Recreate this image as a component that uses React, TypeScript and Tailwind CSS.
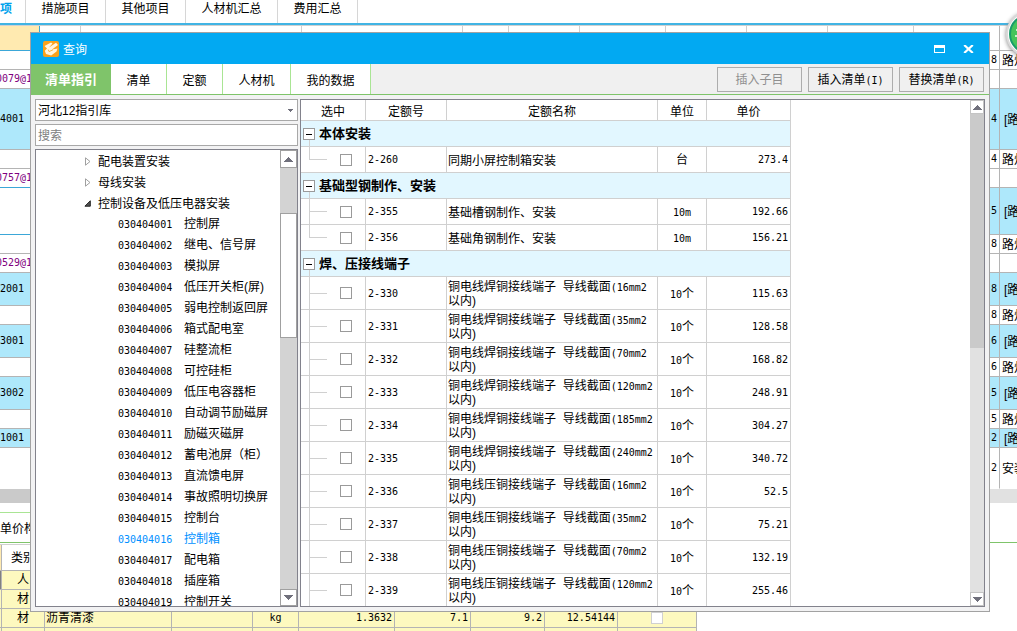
import React from "react";

type Cell = { code?: string; link?: boolean; num?: string; text?: string; height: string; left: string; right: string };

const CYAN = "bg-[#aee8fb] border-[#b4b4b4]";
const WHITE = "bg-white border-[#b4b4b4]";
const WHITE_BLUE = "bg-white border-[#3ba7d8]";
const NUM = "font-['DejaVu_Sans_Mono',monospace] text-[10px]";

const sheetRows: Cell[] = [
  { height: "h-[25px]", left: "bg-[#ffeab0] border-[#3ba7d8]", right: WHITE },
  { height: "h-[19px]", left: WHITE, right: WHITE, num: "8", text: "路灯" },
  { height: "h-[19px]", left: WHITE, right: WHITE, code: "0079@1", link: true },
  { height: "h-[61px]", left: CYAN, right: CYAN, code: "4001", num: "4", text: "[路" },
  { height: "h-[19px]", left: WHITE, right: WHITE, num: "4", text: "路灯" },
  { height: "h-[19px]", left: WHITE_BLUE, right: WHITE, code: "0757@1", link: true },
  { height: "h-[47px]", left: WHITE_BLUE, right: CYAN, num: "5", text: "[路" },
  { height: "h-[19px]", left: WHITE, right: WHITE, num: "8", text: "路灯" },
  { height: "h-[19px]", left: WHITE, right: WHITE, code: "0529@1", link: true },
  { height: "h-[33px]", left: CYAN, right: CYAN, code: "2001", num: "8", text: "[路" },
  { height: "h-[19px]", left: WHITE, right: WHITE, num: "8", text: "路灯" },
  { height: "h-[33px]", left: CYAN, right: CYAN, code: "3001", num: "6", text: "[路" },
  { height: "h-[19px]", left: WHITE, right: WHITE, num: "6", text: "路灯" },
  { height: "h-[33px]", left: CYAN, right: CYAN, code: "3002", num: "5", text: "[路" },
  { height: "h-[19px]", left: WHITE, right: WHITE, num: "5", text: "路灯" },
  { height: "h-[19px]", left: CYAN, right: CYAN, code: "1001", num: "2", text: "[路" },
  { height: "h-[41px]", left: "bg-white border-transparent", right: "bg-white border-r-[#b4b4b4] border-b-transparent", num: "2", text: "安装" },
];

const sheetFillers = ["w-[41px]", "w-[221px]", "w-[161px]", "w-[46px]", "w-[71px]", "w-[86px]", "w-[81px]", "w-[81px]", "w-[86px]"];

const treeItems: [string, string][] = [
  ["030404001", "控制屏"],
  ["030404002", "继电、信号屏"],
  ["030404003", "模拟屏"],
  ["030404004", "低压开关柜(屏)"],
  ["030404005", "弱电控制返回屏"],
  ["030404006", "箱式配电室"],
  ["030404007", "硅整流柜"],
  ["030404008", "可控硅柜"],
  ["030404009", "低压电容器柜"],
  ["030404010", "自动调节励磁屏"],
  ["030404011", "励磁灭磁屏"],
  ["030404012", "蓄电池屏（柜）"],
  ["030404013", "直流馈电屏"],
  ["030404014", "事故照明切换屏"],
  ["030404015", "控制台"],
  ["030404016", "控制箱"],
  ["030404017", "配电箱"],
  ["030404018", "插座箱"],
  ["030404019", "控制开关"],
];

type Quota = { id: string; name: string; spec?: string; unit: string; price: string };

const HAN = "铜电线焊铜接线端子";
const YA = "铜电线压铜接线端子";

const groups: { title: string; rows: Quota[] }[] = [
  { title: "本体安装", rows: [{ id: "2-260", name: "同期小屏控制箱安装", unit: "台", price: "273.4" }] },
  {
    title: "基础型钢制作、安装",
    rows: [
      { id: "2-355", name: "基础槽钢制作、安装", unit: "10m", price: "192.66" },
      { id: "2-356", name: "基础角钢制作、安装", unit: "10m", price: "156.21" },
    ],
  },
  {
    title: "焊、压接线端子",
    rows: [
      { id: "2-330", name: HAN, spec: "16", unit: "10个", price: "115.63" },
      { id: "2-331", name: HAN, spec: "35", unit: "10个", price: "128.58" },
      { id: "2-332", name: HAN, spec: "70", unit: "10个", price: "168.82" },
      { id: "2-333", name: HAN, spec: "120", unit: "10个", price: "248.91" },
      { id: "2-334", name: HAN, spec: "185", unit: "10个", price: "304.27" },
      { id: "2-335", name: HAN, spec: "240", unit: "10个", price: "340.72" },
      { id: "2-336", name: YA, spec: "16", unit: "10个", price: "52.5" },
      { id: "2-337", name: YA, spec: "35", unit: "10个", price: "75.21" },
      { id: "2-338", name: YA, spec: "70", unit: "10个", price: "132.19" },
      { id: "2-339", name: YA, spec: "120", unit: "10个", price: "255.46" },
    ],
  },
];

function Arrow({ up }: { up?: boolean }) {
  return (
    <svg width="9" height="5" viewBox="0 0 9 5" shapeRendering="crispEdges" aria-hidden="true">
      <path d={up ? "M4 0h1v1h1v1h1v1h1v1h1v1H0V4h1V3h1V2h1V1h1z" : "M0 0h9v1H8v1H7v1H6v1H5v1H4V4H3V3H2V2H1V1H0z"} fill="#70707c" />
    </svg>
  );
}

function MainTabs() {
  return (
    <nav className="flex h-[23px] shrink-0 bg-white leading-[18px]">
      <a href="#a" className="w-[26px] border-r border-[#d6d6d6] font-bold text-[#00a2ec]">项</a>
      <a href="#b" className="w-20 border-r border-[#d6d6d6] text-center">措施项目</a>
      <a href="#c" className="w-20 border-r border-[#d6d6d6] text-center">其他项目</a>
      <a href="#d" className="w-[92px] border-r border-[#d6d6d6] text-center">人材机汇总</a>
      <a href="#e" className="w-20 border-r border-[#d6d6d6] text-center">费用汇总</a>
    </nav>
  );
}

function Sheet() {
  return (
    <table className="w-full shrink-0 table-fixed border-separate border-spacing-0 whitespace-nowrap">
      <colgroup>
        <col className="w-10" />
        {sheetFillers.map((w, i) => <col key={i} className={w} />)}
        <col className="w-[86px]" />
        <col />
      </colgroup>
      <tbody>
        {sheetRows.map((r, i) => (
          <tr key={i} className={r.height}>
            <td className={`border-r border-b p-0 ${NUM} ${r.left} ${r.link ? "-indent-1 text-[#800080]" : ""}`}>{r.code}</td>
            {sheetFillers.map((_, k) => <td key={k} className="border-r border-b border-[#d0d0d0] p-0" />)}
            <td className={`border-r border-b p-0 pr-[2px] text-right ${NUM} ${r.right}`}>{r.num}</td>
            <td className={`overflow-hidden border-b p-0 pt-[2px] leading-[14px] ${r.text?.startsWith("[") ? "pl-1" : "pl-[2px]"} ${r.right}`}>{r.text}</td>
          </tr>
        ))}
      </tbody>
    </table>
  );
}

function Materials() {
  const c = "border-r border-b border-[#b4b4b4] p-0";
  return (
    <table className="w-full table-fixed border-separate border-spacing-0 leading-[14px]">
      <colgroup>
        <col className="w-[2px]" /><col className="w-[43px]" /><col className="w-[127px]" /><col className="w-[81px]" />
        <col className="w-[46px]" /><col className="w-[96px]" /><col className="w-[76px]" /><col className="w-[74px]" />
        <col className="w-[73px]" /><col className="w-[79px]" />
      </colgroup>
      <thead>
        <tr className="h-[26px]">
          <th className={`${c} bg-[#ffeab0]`} />
          <th className={`${c} font-normal`}>类别</th>
          <th colSpan={8} className={c} />
        </tr>
      </thead>
      <tbody className="bg-[#fdf9bf]">
        {["人", "材", "材", ""].map((kind, i) => (
          <tr key={i} className="h-[19px]">
            <td className={`${c} ${i === 0 ? "bg-[#808080]" : ""}`} />
            <td className={`${c} text-center`}>{kind}</td>
            <td className={`${c} pl-px`}>{i === 2 && "沥青清漆"}</td>
            <td className={c} />
            <td className={`${c} text-center ${NUM}`}>{i === 2 && "kg"}</td>
            <td className={`${c} pr-[2px] text-right ${NUM}`}>{i === 2 && "1.3632"}</td>
            <td className={`${c} pr-[2px] text-right ${NUM}`}>{i === 2 && "7.1"}</td>
            <td className={`${c} pr-[2px] text-right ${NUM}`}>{i === 2 && "9.2"}</td>
            <td className={`${c} pr-[2px] text-right ${NUM}`}>{i === 2 && "12.54144"}</td>
            <td className={c}>
              <input type="checkbox" aria-label="暂估" className="mx-auto block size-3 appearance-none border border-[#d0d0d0] bg-white" />
            </td>
          </tr>
        ))}
      </tbody>
    </table>
  );
}

function TitleBar() {
  return (
    <header className="flex h-[31px] shrink-0 items-center bg-[#02a9f2] pr-[15px] pl-3 text-white">
      <svg width="16" height="16" viewBox="0 0 16 16" aria-hidden="true">
        <rect width="16" height="16" rx="2" fill="#f9a11b" />
        <path d="M1.5 5 8 1.5 9.5 2.5 6 6.5 13 1.8 15 4 9 8.6l5.5-1.2-1 3.2-5.3 3.8L3 13 1.8 9.8 4 7.6z" fill="#fff4df" />
        <path d="M5.2 8.6 6 10.6 10 8.8" stroke="#f9a11b" strokeWidth=".8" fill="none" />
      </svg>
      <h1 className="ml-1 flex-1 pt-[2px]">查询</h1>
      <button aria-label="最大化" className="mr-[18px]">
        <svg width="11" height="8" viewBox="0 0 11 8" shapeRendering="crispEdges"><path d="M0 0h11v8H0zM1 3v4h9V3z" fill="#fff" fillRule="evenodd" /></svg>
      </button>
      <button aria-label="关闭">
        <svg width="11" height="8" viewBox="0 0 11 8"><path d="M1.2 0 9.8 8M9.8 0 1.2 8" stroke="#fff" strokeWidth="2.2" /></svg>
      </button>
    </header>
  );
}

function Toolbar() {
  const tab = "border-r border-[#a9e594] bg-white pt-[4px] text-center";
  const button = "h-[25px] w-[85px] border border-[#adadad] bg-[#f0f0f0] pt-[2px]";
  return (
    <div className="flex h-[31px] shrink-0 border-b border-[#7fc46a] bg-[#f0f0f0]">
      <button className="w-20 bg-[#7fc46a] pt-[2px] text-[13px] font-bold text-white">清单指引</button>
      <button className={`${tab} w-14`}>清单</button>
      <button className={`${tab} w-14`}>定额</button>
      <button className={`${tab} w-[68px]`}>人材机</button>
      <button className={`${tab} w-20`}>我的数据</button>
      <div className="flex flex-1 items-center justify-end gap-[6px] pr-[5px]">
        <button disabled className={`${button} text-[#8f8f8f]`}>插入子目</button>
        <button className={button}>插入清单<span className={NUM}>(I)</span></button>
        <button className={button}>替换清单<span className={NUM}>(R)</span></button>
      </div>
    </div>
  );
}

function Tree() {
  return (
    <div className="flex min-h-0 flex-1 border border-[#82828c] bg-white">
      <ul className="min-w-0 flex-1 overflow-hidden pt-px leading-[21px]">
        {["配电装置安装", "母线安装"].map((t) => (
          <li key={t} className="flex h-[21px] items-center pl-[49px]">
            <svg width="6" height="9" viewBox="0 0 6 9" aria-hidden="true"><path d="M.5.8v7.4L5 4.5z" fill="#fff" stroke="#a0a0a0" /></svg>
            <span className="ml-[7px] pt-px">{t}</span>
          </li>
        ))}
        <li>
          <div className="flex h-[21px] items-center pl-12">
            <svg width="7" height="7" viewBox="0 0 7 7" aria-hidden="true"><path d="M6.3.8v5.4H.9z" fill="#505050" stroke="#262626" /></svg>
            <span className="ml-[7px] pt-px">控制设备及低压电器安装</span>
          </div>
          <ul>
            {treeItems.map(([code, name]) => (
              <li key={code} className={`flex h-[21px] pl-[82px] whitespace-nowrap ${code === "030404016" ? "text-[#0090ff]" : ""}`}>
                <span className={`w-[66px] ${NUM} leading-[21px]`}>{code}</span>
                <span>{name}</span>
              </li>
            ))}
          </ul>
        </li>
      </ul>
      <div className="flex w-[17px] shrink-0 flex-col bg-[#d3d3d3]">
        <button aria-label="向上" className="flex h-[18px] items-center justify-center border border-[#a0a0a0] bg-white"><Arrow up /></button>
        <div className="mt-[45px] h-[125px] border border-[#a0a0a0] bg-white" />
        <button aria-label="向下" className="mt-auto flex h-[17px] items-center justify-center border border-[#a0a0a0] bg-white"><Arrow /></button>
      </div>
    </div>
  );
}

function QuotaRow({ q, last }: { q: Quota; last: boolean }) {
  const c = "border-r border-b border-[#d0d0d0] p-0";
  return (
    <tr>
      <td className={c}>
        <div className={`flex pl-2 ${q.spec ? "h-8" : "h-[25px]"}`}>
          <div className="flex w-[18px] flex-col">
            <div className="flex-1 border-b border-l border-[#d0d0d0]" />
            <div className={`flex-1 ${last ? "" : "border-l border-[#d0d0d0]"}`} />
          </div>
          <input type="checkbox" aria-label={q.id} className="ml-[13px] size-3 appearance-none self-center border border-[#9a9a9a] bg-white" />
        </div>
      </td>
      <td className={`${c} pt-px pl-[2px] ${NUM}`}>{q.id}</td>
      <td className={`${c} pt-[2px] pl-px whitespace-nowrap`}>
        {q.name}
        {q.spec && (
          <>
            {"\u00a0\u00a0导线截面"}
            <span className={`${NUM} leading-none`}>({q.spec}mm2</span>
            <br />
            以内)
          </>
        )}
      </td>
      <td className={`${c} pt-px text-center`}>
        <span className={`${NUM} leading-none`}>{q.unit.replace(/[个台]/, "")}</span>
        {q.unit.replace("10m", "").replace("10", "")}
      </td>
      <td className={`${c} pt-px pr-[2px] text-right ${NUM}`}>{q.price}</td>
    </tr>
  );
}

function QuotaPanel() {
  const h = "border-r border-b border-[#d0d0d0] p-0 pt-[3px] font-normal";
  return (
    <div className="flex min-w-0 flex-1 border border-[#82828c] bg-white">
      <div className="min-w-0 flex-1 overflow-hidden">
        <table className="w-[490px] table-fixed border-separate border-spacing-0 leading-[14px]">
          <colgroup>
            <col className="w-[65px]" /><col className="w-[81px]" /><col className="w-[211px]" /><col className="w-[49px]" /><col className="w-[84px]" />
          </colgroup>
          <thead>
            <tr className="h-[21px]">
              <th className={h}>选中</th><th className={h}>定额号</th><th className={h}>定额名称</th><th className={h}>单位</th><th className={h}>单价</th>
            </tr>
          </thead>
          {groups.map((g) => (
            <tbody key={g.title}>
              <tr>
                <th colSpan={5} className="border-r border-b border-[#d0d0d0] bg-[#e2f7ff] p-0 text-left">
                  <div className="flex h-[25px] pl-[2px]">
                    <div className="flex w-3 flex-col items-center pt-[7px]">
                      <button aria-label="折叠" className="flex size-3 shrink-0 items-center justify-center border border-[#9a9a9a] bg-white">
                        <span className="block h-px w-[6px] bg-black" />
                      </button>
                      <span className="w-px flex-1 bg-[#d0d0d0]" />
                    </div>
                    <span className="ml-1 text-[13px] leading-[25px] font-bold">{g.title}</span>
                  </div>
                </th>
              </tr>
              {g.rows.map((q, i) => <QuotaRow key={q.id} q={q} last={i === g.rows.length - 1 && !q.spec} />)}
            </tbody>
          ))}
        </table>
      </div>
      <div className="flex w-[14px] shrink-0 flex-col bg-[#e1e1e1]">
        <button aria-label="向上" className="flex h-[14px] items-center justify-center border border-[#c4c4c4] bg-white"><Arrow up /></button>
        <div className="h-[234px] bg-[#cacaca]" />
        <button aria-label="向下" className="mt-auto flex h-[14px] items-center justify-center border border-[#c4c4c4] bg-white"><Arrow /></button>
      </div>
    </div>
  );
}

export default function App() {
  return (
    <div className="relative flex h-screen flex-col overflow-hidden bg-white font-['Liberation_Sans','Noto_Sans_CJK_SC',sans-serif] text-[12px] leading-[16px] text-black">
      <MainTabs />
      <div className="h-[3px] shrink-0 border-b border-[#d0d0d0] bg-[#41b4e4]" />
      <Sheet />
      <div className="flex h-[14px] shrink-0 bg-[#e1e1e1]"><div className="w-1/2 bg-[#cacaca]" /></div>
      <div className="mt-[9px] flex h-[31px] shrink-0 border-b border-[#7fc46a]">
        <button className="w-16 border-t border-[#a9e594] pt-[3px] text-left">单价构成</button>
      </div>
      <div className="mt-px w-[697px] shrink-0 border-t border-[#d0d0d0]"><Materials /></div>

      <div className="absolute top-[11px] -right-[35px] size-[46px] rounded-full border-2 border-[#d9d9d9] bg-white p-px shadow-[0_1px_4px_#888]">
        <svg width="40" height="40" viewBox="0 0 40 40" aria-hidden="true">
          <circle cx="20" cy="20" r="19" fill="#45c45c" stroke="#189c6c" strokeWidth="2" />
          <path d="M7 16h10M10 12v15M6 22h8" stroke="#c8f5cc" strokeWidth="2" />
        </svg>
      </div>

      <section role="dialog" aria-label="查询" className="absolute top-[32px] right-[27px] bottom-[19px] left-[30px] flex flex-col border border-[#a2a2a2] bg-[#f2f2f3]">
        <TitleBar />
        <Toolbar />
        <div className="flex min-h-0 flex-1 gap-[2px] p-1">
          <div className="flex w-[263px] shrink-0 flex-col">
            <div className="relative">
              <select aria-label="指引库" className="block h-[22px] w-full appearance-none border border-[#a8a8a8] bg-white pt-px pl-[2px]">
                <option>河北12指引库</option>
              </select>
              <svg className="pointer-events-none absolute top-[10px] right-[5px]" width="5" height="3" viewBox="0 0 5 3" shapeRendering="crispEdges"><path d="M0 0h5v1H4v1H3v1H2V2H1V1H0z" fill="#70707c" /></svg>
            </div>
            <input aria-label="搜索" placeholder="搜索" className="mt-[3px] mb-[3px] h-[22px] border border-[#a8a8a8] bg-white pt-px pl-[2px] placeholder:text-[#808080]" />
            <Tree />
          </div>
          <QuotaPanel />
        </div>
      </section>
    </div>
  );
}
